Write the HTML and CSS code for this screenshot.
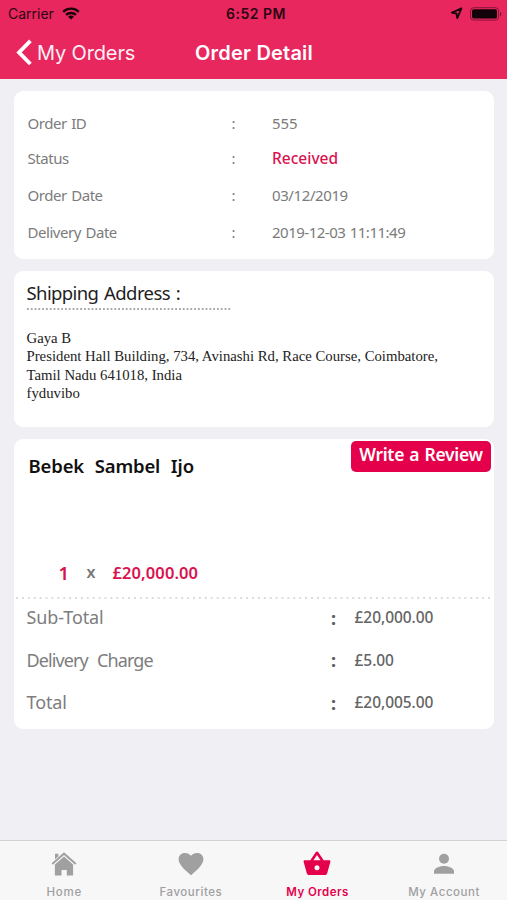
FILE: index.html
```html
<!DOCTYPE html>
<html lang="en">
<head>
<meta charset="utf-8">
<meta name="viewport" content="width=device-width, initial-scale=1">
<title>Order Detail</title>
<link rel="stylesheet" href="styles.css">
</head>
<body>
<header class="header">
  <div class="status-bar">
    <div class="carrier"><span>Carrier</span>
      <svg class="wifi" width="18" height="13" viewBox="0 0 18 13" fill="none" stroke="currentColor" stroke-width="2.4"><path d="M1.200 4.800C5.600 .6 12.400 .6 16.800 4.800M4 7.900C6.800 5.300 11.200 5.300 14 7.900"/><path d="M9 12.600 6 9.700C7.600 8.200 10.400 8.200 12 9.700Z" fill="currentColor" stroke="none"/></svg>
    </div>
    <span class="time">6:52 PM</span>
    <div class="indicators">
      <svg width="13" height="13" viewBox="0 0 13 13" fill="none" stroke="currentColor" stroke-width="1.8" stroke-linejoin="round"><path d="M11.400 1.400 1.800 5.700 6.400 6.500 7.300 11.100Z"/></svg>
      <svg width="32" height="14" viewBox="0 0 32 14"><rect x=".5" y=".7" width="28" height="12.4" rx="3.2" fill="none" stroke="currentColor" stroke-opacity=".45"/><rect x="2" y="2.2" width="25" height="9.4" rx="1.8" fill="currentColor"/><path d="M30 4.700c1.700.6 1.700 4 0 4.600z" fill="currentColor" fill-opacity=".5"/></svg>
    </div>
  </div>
  <nav class="nav-bar">
    <a class="back"><svg width="16" height="27" viewBox="0 0 16 27" fill="none" stroke="currentColor" stroke-width="3.8"><path d="M14.400 1.800 3 13.400 14.400 25"/></svg><span>My Orders</span></a>
    <h1 class="title">Order Detail</h1>
    <span></span>
  </nav>
</header>

<main class="content">
  <section class="card summary">
    <div class="info"><span>Order ID</span><span class="sep">:</span><span class="num short">555</span></div>
    <div class="info"><span>Status</span><span class="sep">:</span><span class="received">Received</span></div>
    <div class="info"><span>Order Date</span><span class="sep">:</span><span class="num">03/12/2019</span></div>
    <div class="info"><span>Delivery Date</span><span class="sep">:</span><span class="num long">2019-12-03 11:11:49</span></div>
  </section>

  <section class="card shipping">
    <h2 class="ship-title">Shipping Address :</h2>
    <svg class="ship-rule" width="206" height="2"><line x1="0" y1="1" x2="205" y2="1"/></svg>
    <address class="address">Gaya B<br>President Hall Building, 734, Avinashi Rd, Race Course, Coimbatore,<br>Tamil Nadu 641018, India<br>fyduvibo</address>
  </section>

  <section class="card items">
    <div class="item-head">
      <h2 class="item-name">Bebek Sambel Ijo</h2>
      <button class="review" type="button">Write a Review</button>
    </div>
    <div class="item-price"><span class="qty">1</span><span class="times">x</span><span class="price">£20,000.00</span></div>
    <svg class="divider" width="476" height="3"><line x1="2" y1="1" x2="476" y2="1"/></svg>
    <div class="totals">
      <div class="total-row"><span class="total-label">Sub-Total</span><span class="colon">:</span><span class="amount">£20,000.00</span></div>
      <div class="total-row"><span class="total-label tight">Delivery Charge</span><span class="colon">:</span><span class="amount">£5.00</span></div>
      <div class="total-row"><span class="total-label">Total</span><span class="colon">:</span><span class="amount">£20,005.00</span></div>
    </div>
  </section>
</main>

<nav class="tabs">
  <a class="tab home"><svg width="26" height="26" viewBox="0 0 26 26" fill="currentColor"><path d="M4 2.700h3.400v2.600L4 8.300z"/><path d="M.6 12.200 13 1.200 25.400 12.200 24.200 13.700 13 3.900 1.800 13.700z"/><path d="M3.900 13.400 13 5.400 22.100 13.400V24.600h-6.300v-5.500h-5.300v5.500H3.900z"/></svg><span>Home</span></a>
  <a class="tab"><svg width="26" height="26" viewBox="0 0 26 26" fill="currentColor"><path d="M13 24.200C9 20.500 .6 14.500 .6 8.300.6 4.500 3.300 1.900 6.900 1.900c2.600 0 4.800 1.100 6.100 2.900 1.300-1.800 3.500-2.900 6.100-2.900 3.600 0 6.300 2.600 6.300 6.400 0 6.200-8.400 12.200-12.400 15.900z"/></svg><span>Favourites</span></a>
  <a class="tab active"><svg width="28" height="26" viewBox="0 0 28 26" fill="currentColor"><path fill-rule="evenodd" d="M20.700 9.300 15.100 1a1.300 1.300 0 0 0-2.200 0L7.300 9.300H1.700C.9 9.300.4 10 .6 10.700l3.200 11.500c.3 1.100 1.200 1.800 2.300 1.800h15.800c1.100 0 2-.7 2.300-1.800l3.200-11.500c.2-.7-.3-1.400-1.100-1.400zM10.400 9.300 14 4l3.600 5.300zM14 19.200a2.500 2.500 0 1 1 0-5 2.500 2.500 0 0 1 0 5z"/></svg><span>My Orders</span></a>
  <a class="tab account"><svg width="26" height="26" viewBox="0 0 26 26" fill="currentColor"><circle cx="13" cy="7.700" r="5"/><path d="M3 22.700v-2.600c0-3.400 6.700-5.200 10-5.200s10 1.800 10 5.200v2.600z"/></svg><span>My Account</span></a>
</nav>
</body>
</html>
```
FILE: styles.css
```css
* { box-sizing: border-box; }

body {
  margin: 0;
  height: 900px;
  display: flex;
  flex-direction: column;
  overflow: hidden;
  background: #efeff4;
  font-family: "Noto Sans", sans-serif;
  white-space: nowrap;
}

svg { display: block; flex: none; }
h1, h2 { margin: 0; font-weight: inherit; }

.header {
  height: 79px;
  flex: none;
  background: #e8275f;
  font-family: Inter, sans-serif;
}

.status-bar {
  height: 27px;
  padding: 0 5px 0 8px;
  display: grid;
  grid-template-columns: 1fr auto 1fr;
  align-items: center;
  color: #2b0612;
  font-size: 14px;
}
.carrier { display: flex; align-items: center; gap: 8px; }
.wifi { color: #1b030a; }
.time { font-weight: 600; letter-spacing: .5px; padding-left: 2px; }
.indicators { display: flex; justify-content: flex-end; align-items: center; gap: 7px; color: #14020a; }

.nav-bar {
  height: 51px;
  padding: 0 16px;
  display: grid;
  grid-template-columns: 1fr auto 1fr;
  align-items: center;
  color: #fff;
  font-size: 20px;
}
.back { display: flex; align-items: center; gap: 5px; }
.back span { opacity: .93; letter-spacing: -.15px; }
.title { font-size: 20px; font-weight: 600; letter-spacing: .2px; padding-left: 1px; }

.content {
  flex: 1;
  padding: 12px 13px 0 14px;
  display: flex;
  flex-direction: column;
  gap: 12px;
}
.card { background: #fff; border-radius: 9px; flex: none; }

.summary {
  height: 168px;
  padding: 15px 13.500px 0;
  display: grid;
  grid-template-rows: 34px 36px 38px 35px;
  align-content: start;
  color: #7b7b7b;
  font-size: 15px;
  letter-spacing: -.45px;
  word-spacing: 1px;
}
.info { display: grid; grid-template-columns: 204px 40.500px 1fr; align-items: center; }
.num { letter-spacing: -.4px; }
.long { letter-spacing: -.5px; }
.short { letter-spacing: -.1px; }
.received { color: #d9134f; font-weight: 500; font-size: 15.500px; letter-spacing: 0; }

.shipping { height: 156px; padding: 9px 12.500px 0; }
.ship-title { font-size: 18.500px; line-height: 26px; letter-spacing: -.6px; word-spacing: 1.500px; color: #1e1e1e; }
.ship-rule { margin-top: 2px; }
.ship-rule line { stroke: #8a8a8a; stroke-width: 1.300; stroke-dasharray: 1.800 2; }
.address {
  margin-top: 19px;
  font: normal 14.750px/18.400px "Liberation Serif", serif;
  color: #222;
}

.items { height: 290px; }
.item-head {
  height: 113px;
  padding: 2px 3px 0 14.500px;
  display: flex;
  justify-content: space-between;
  align-items: flex-start;
}
.item-name {
  font-size: 18.500px;
  line-height: 26px;
  margin-top: 12px;
  font-weight: 600;
  letter-spacing: -.15px;
  word-spacing: 6px;
  color: #111;
}
.review {
  width: 140px;
  height: 31px;
  padding: 0 0 4px;
  border: 0;
  border-radius: 5px;
  background: #e4004b;
  color: #fff;
  font: 600 17.500px/27px "Noto Sans", sans-serif;
  letter-spacing: -.3px;
  word-spacing: 1px;
}
.item-price {
  height: 40px;
  padding-left: 44.500px;
  display: grid;
  grid-template-columns: 28px 26px 1fr;
  align-items: center;
  color: #d9134f;
  font-weight: 600;
  font-size: 16.500px;
}
.qty { font-size: 18.500px; }
.times { color: #777; font-size: 16px; }
.price { letter-spacing: .1px; }
.divider { margin: 5px 0 0; }
.divider line { stroke: #dcdcdc; stroke-width: 1.800; stroke-dasharray: 2 3.900; }

.totals { margin-top: -4px; padding-left: 12.500px; }
.total-row {
  height: 42.600px;
  display: grid;
  grid-template-columns: 304.500px 23.500px 1fr;
  align-items: center;
  color: #7d7d7d;
}
.total-label { font-size: 18px; letter-spacing: -.1px; }
.tight { letter-spacing: -.9px; word-spacing: 5.500px; }
.colon { font-size: 18px; font-weight: 700; color: #5e5e5e; padding-top: 1px; }
.amount { font-size: 15.500px; font-weight: 500; letter-spacing: -.05px; color: #646464; }

.tabs {
  height: 60px;
  flex: none;
  padding-left: 1px;
  display: grid;
  grid-template-columns: repeat(4, 126.600px);
  background: #f7f7f8;
  border-top: 1px solid #d2d2d6;
  color: #a0a0a0;
  font: 500 11.500px/14px Inter, sans-serif;
  letter-spacing: .55px;
}
.tab { display: flex; flex-direction: column; align-items: center; gap: 8px; padding-top: 10px; }
.home span { letter-spacing: .75px; }
.active { color: #e4004b; font-weight: 600; letter-spacing: .45px; }
```
